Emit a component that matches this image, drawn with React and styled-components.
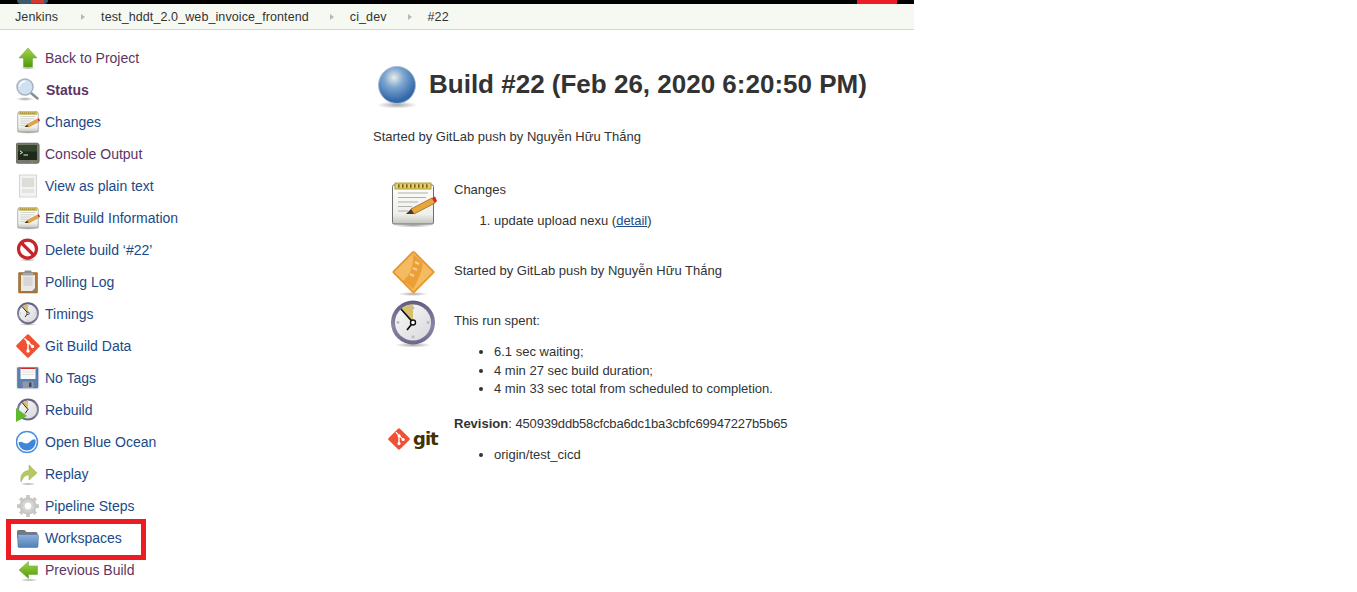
import React from 'react';
import styled, { createGlobalStyle } from 'styled-components';

const Global = createGlobalStyle`
  html, body {
    margin: 0;
    padding: 0;
    background: #fff;
    font-family: "Liberation Sans", Arial, sans-serif;
    color: #333;
  }
`;

const Page = styled.div`
  position: relative;
  width: 914px;
  height: 592px;
  overflow: hidden;
`;

const TopBar = styled.div`
  display: flex;
  justify-content: space-between;
  height: 4px;
  padding: 0 17px;
  background: #000;
  overflow: hidden;
`;
const LogoStub = styled.div`
  display: flex;
  width: 31px;
  height: 4px;
  background: #3d5a6c;
  border-radius: 0 0 8px 8px;
`;
const LogoRed = styled.div`
  width: 13px;
  height: 3px;
  margin-left: 14px;
  background: #d33833;
`;
const RedTab = styled.div`
  width: 40px;
  background: #ed1c24;
`;

const Crumbs = styled.div`
  display: flex;
  align-items: center;
  height: 25px;
  padding-left: 15px;
  background: #f6f9f2;
  border-bottom: 1px solid #d3d7cf;
  font-size: 12.5px;
  letter-spacing: 0.1px;
  color: #333;
`;
const Crumb = styled.span`
  &:first-child {
    margin-right: 2px;
  }
`;
const CrumbArrow = styled.span`
  width: 0;
  height: 0;
  margin: 0 16px 0 21px;
  border-left: 4px solid #b8b8b8;
  border-top: 3.5px solid transparent;
  border-bottom: 3.5px solid transparent;
`;

const Body = styled.div`
  display: flex;
`;

const Side = styled.nav`
  display: flex;
  flex-direction: column;
  width: 373px;
  flex: none;
  padding: 12px 0 0 16px;
  box-sizing: border-box;
`;
const Task = styled.div`
  display: flex;
  align-items: center;
  gap: ${(p) => (p.$bold ? 6 : 5)}px;
  height: 32px;
  font-size: 14px;
  font-weight: ${(p) => (p.$bold ? 700 : 400)};
  color: ${(p) => (p.$visited ? '#5c3566' : '#204a87')};
`;

const Main = styled.main`
  flex: 1;
`;
const TitleRow = styled.div`
  display: flex;
  align-items: center;
  gap: 8px;
  height: 48px;
  margin-top: 31px;
`;
const Title = styled.h1`
  margin: 0;
  padding-bottom: 2px;
  font-size: 26px;
  font-weight: 700;
  color: #333;
`;
const Intro = styled.p`
  margin: 19px 0 0;
  font-size: 13px;
  line-height: 18.5px;
`;
const Row = styled.div`
  display: grid;
  grid-template-columns: 48px 1fr;
  column-gap: 17px;
  margin: ${(p) => p.$top}px 0 0 16px;
`;
const RowBody = styled.div`
  padding-top: ${(p) => p.$pad || 0}px;
  align-self: ${(p) => (p.$center ? 'center' : 'start')};
  font-size: 13px;
  line-height: 18.5px;
`;
const Para = styled.div`
  margin-bottom: 13px;
`;
const ItemList = styled.ul`
  margin: 0;
  padding: 0 0 0 40px;
  list-style: ${(p) => p.$kind || 'disc'};
`;
const Detail = styled.span`
  color: #204a87;
  text-decoration: underline;
`;
const Hash = styled.span`
  letter-spacing: -0.16px;
`;
const IconCell = styled.div`
  align-self: ${(p) => (p.$center ? 'center' : 'start')};
  height: 48px;
`;

const Annotation = styled.div`
  position: absolute;
  left: 6px;
  top: 519px;
  width: 140px;
  height: 41px;
  box-sizing: border-box;
  border: 5px solid #ed1c24;
`;

const GitMark = styled.div`
  display: flex;
  align-items: center;
  gap: 3px;
  height: 46px;
  padding-bottom: 2px;
  margin-left: -1px;
`;
const GitWord = styled.span`
  font-family: "DejaVu Sans", sans-serif;
  font-size: 18px;
  font-weight: 700;
  letter-spacing: -1px;
  color: #413000;
`;

const Defs = () => (
  <svg width="0" height="0" style={{ position: 'absolute' }}>
    <defs>
      <linearGradient id="greenUp" x1="0" y1="0" x2="0" y2="1">
        <stop offset="0" stopColor="#a6d34f" />
        <stop offset="1" stopColor="#4e9a06" />
      </linearGradient>
      <linearGradient id="paper" x1="0" y1="0" x2="0" y2="1">
        <stop offset="0" stopColor="#fdfdfb" />
        <stop offset="0.75" stopColor="#efefeb" />
        <stop offset="1" stopColor="#c4c4be" />
      </linearGradient>
      <radialGradient id="ball" cx="0.42" cy="0.3" r="0.75">
        <stop offset="0" stopColor="#e8eee6" />
        <stop offset="0.35" stopColor="#7fa6d0" />
        <stop offset="0.85" stopColor="#2f66a8" />
        <stop offset="1" stopColor="#3f74b0" />
      </radialGradient>
      <radialGradient id="shadow" cx="0.5" cy="0.5" r="0.5">
        <stop offset="0" stopColor="#000" stopOpacity="0.35" />
        <stop offset="1" stopColor="#000" stopOpacity="0" />
      </radialGradient>
      <linearGradient id="folder" x1="0" y1="0" x2="0" y2="1">
        <stop offset="0" stopColor="#8fb3dc" />
        <stop offset="1" stopColor="#4f7fb8" />
      </linearGradient>
      <linearGradient id="face" x1="0" y1="0" x2="1" y2="1">
        <stop offset="0" stopColor="#fafaf8" />
        <stop offset="1" stopColor="#d8d8dc" />
      </linearGradient>
      <linearGradient id="bezel" x1="0" y1="0" x2="0" y2="1">
        <stop offset="0" stopColor="#5f5b7e" />
        <stop offset="0.6" stopColor="#8a87a6" />
        <stop offset="1" stopColor="#6a6688" />
      </linearGradient>
      <radialGradient id="cog" cx="0.5" cy="0.5" r="0.5">
        <stop offset="0" stopColor="#f2f2f0" />
        <stop offset="1" stopColor="#c0c0bd" />
      </radialGradient>
    </defs>
  </svg>
);

const Svg = ({ size = 24, children }) => (
  <svg width={size} height={size} viewBox="0 0 48 48" style={{ flex: 'none', display: 'block' }}>
    {children}
  </svg>
);

const UpArrow = () => (
  <Svg>
    <ellipse cx="24" cy="44" rx="16" ry="3" fill="url(#shadow)" />
    <path d="M24 4 L42 24 H33 V42 H15 V24 H6 Z" fill="url(#greenUp)" stroke="#6aa32a" strokeWidth="1" />
  </Svg>
);
const LeftArrow = () => (
  <Svg>
    <ellipse cx="26" cy="44" rx="18" ry="3" fill="url(#shadow)" />
    <path d="M6 24 L25 7 V16 H43 V33 H25 V41 Z" fill="url(#greenUp)" stroke="#6aa32a" strokeWidth="1" />
  </Svg>
);
const Magnifier = () => (
  <Svg>
    <ellipse cx="18" cy="42" rx="18" ry="4" fill="url(#shadow)" />
    <path d="M30 30 L43 41" stroke="#8a8f94" strokeWidth="5" strokeLinecap="round" />
    <circle cx="18" cy="18" r="16" fill="#cfe0f3" stroke="#a9b2ba" strokeWidth="3" />
    <path d="M7 17 A11 11 0 0 1 19 7" fill="none" stroke="#fff" strokeWidth="3" />
  </Svg>
);
const Notepad = ({ size = 24 }) => (
  <Svg size={size}>
    <ellipse cx="24" cy="45.5" rx="21" ry="2" fill="url(#shadow)" />
    <rect x="3.5" y="5" width="41" height="39" rx="1.5" fill="url(#paper)" stroke="#6f6f6f" strokeWidth="1" />
    <rect x="6" y="3" width="36" height="6" fill="#e3cf72" stroke="#a08a24" strokeWidth="0.8" />
    <path d="M9 6h1.6M13 6h1.6M17 6h1.6M21 6h1.6M25 6h1.6M29 6h1.6M33 6h1.6M37 6h1.6" stroke="#7a6510" strokeWidth="3.5" />
    <path d="M9 13h30M9 17.5h28M9 22h20M9 26.5h14M9 31h10" stroke="#a8a8a4" strokeWidth="0.9" />
    <path d="M22 29 L43 18 L46 23 L25 34 Z" fill="#e9a63c" stroke="#9c6a1a" strokeWidth="0.8" />
    <path d="M22 29 L25 34 L17 34 Z" fill="#4a3a20" />
    <path d="M43 18 L46 16.5 L48 21 L46 23 Z" fill="#d8232a" />
  </Svg>
);
const Terminal = () => (
  <Svg>
    <rect x="-0.5" y="2" width="47" height="41" rx="5" fill="#77796f" stroke="#55584f" strokeWidth="1" />
    <rect x="4" y="6" width="38" height="30" fill="#1d2a1a" />
    <rect x="4" y="6" width="38" height="13" fill="#33452d" />
    <path d="M8 18 L13 21 L8 24" fill="none" stroke="#e6efe0" strokeWidth="2" />
    <path d="M15 26 H24" stroke="#e6efe0" strokeWidth="2" />
    <circle cx="32" cy="40" r="1" fill="#8ae234" />
  </Svg>
);
const PlainDoc = () => (
  <Svg>
    <rect x="7" y="2" width="34" height="44" fill="#f2f2f0" stroke="#c8c8c4" strokeWidth="1.5" />
    <rect x="12" y="8" width="24" height="18" fill="#dcdcd9" />
    <rect x="12" y="30" width="24" height="8" fill="#e4e4e1" />
  </Svg>
);
const NoSign = () => (
  <Svg>
    <ellipse cx="24" cy="44" rx="17" ry="3" fill="url(#shadow)" />
    <circle cx="23" cy="22" r="18" fill="#fff" stroke="#c4262a" strokeWidth="6.5" />
    <path d="M10 9 L36 35" stroke="#c4262a" strokeWidth="6.5" />
  </Svg>
);
const Clipboard = () => (
  <Svg>
    <rect x="5" y="5" width="38" height="41" rx="1.5" fill="#a9773a" stroke="#8a5c22" strokeWidth="1" />
    <rect x="10" y="10" width="28" height="32" fill="#e9e9e6" />
    <rect x="15" y="14" width="18" height="18" fill="#d6d6d3" />
    <rect x="17" y="1" width="14" height="8" rx="2" fill="#8d9096" />
    <rect x="13" y="6" width="22" height="5" rx="1" fill="#a3a6ab" />
    <path d="M32 42 L38 36 V42 Z" fill="#8b8b88" />
  </Svg>
);
const Clock = ({ size = 24 }) => (
  <Svg size={size}>
    <ellipse cx="24" cy="45" rx="18" ry="2.5" fill="url(#shadow)" />
    <circle cx="24" cy="22.5" r="22" fill="url(#bezel)" />
    <circle cx="24" cy="22.5" r="18" fill="url(#face)" />
    <path d="M24 22.5 L13 8.5 A18 18 0 0 1 24 4.5 Z" fill="#d8c06a" />
    <circle cx="24" cy="8" r="1.4" fill="#bbb" />
    <circle cx="9" cy="22.5" r="1.4" fill="#bbb" />
    <circle cx="39" cy="22.5" r="1.4" fill="#bbb" />
    <circle cx="24" cy="37" r="1.4" fill="#bbb" />
    <path d="M24 22.5 L12 9 M24 22.5 L18 30" stroke="#111" strokeWidth="1.8" />
    <circle cx="24" cy="22.5" r="2.5" fill="#fff" stroke="#111" strokeWidth="1.4" />
  </Svg>
);
const GitDiamond = ({ size = 24 }) => (
  <Svg size={size}>
    <rect x="6.5" y="6.5" width="35" height="35" rx="3" transform="rotate(45 24 24)" fill="#f05133" />
    <path d="M17 9 L35 27" stroke="#fff" strokeWidth="3" />
    <path d="M24 17 V33" stroke="#fff" strokeWidth="3" />
    <circle cx="24" cy="17" r="3.4" fill="#fff" />
    <circle cx="24" cy="34" r="3.4" fill="#fff" />
    <circle cx="33" cy="25" r="3.4" fill="#fff" />
  </Svg>
);
const Floppy = () => (
  <Svg>
    <rect x="0" y="1" width="47" height="46" fill="#eeeeee" />
    <rect x="3" y="3" width="41" height="41" rx="2" fill="#5b7fb0" stroke="#3f5f8f" strokeWidth="1" />
    <rect x="9" y="3" width="30" height="23" fill="#fafafa" />
    <rect x="9" y="3" width="30" height="3" fill="#cc2a2a" />
    <path d="M12 12h24M12 17h24" stroke="#d8d8d8" strokeWidth="1.5" />
    <rect x="13" y="31" width="22" height="13" fill="#8f98a6" />
    <rect x="26" y="33" width="5" height="9" fill="#3d4a5e" />
  </Svg>
);
const Rebuild = () => (
  <Svg>
    <circle cx="24" cy="23" r="22" fill="url(#bezel)" />
    <circle cx="24" cy="23" r="18" fill="url(#face)" />
    <path d="M24 23 L13 9 A18 18 0 0 1 24 5 Z" fill="#d8c06a" />
    <path d="M24 23 L12 9 M24 23 L18 31" stroke="#111" strokeWidth="1.8" />
    <path d="M0 20 L22 36 L0 48 Z" fill="#5fb82e" />
  </Svg>
);
const Ocean = () => (
  <Svg>
    <circle cx="22" cy="24" r="21" fill="#fff" stroke="#4a90e0" strokeWidth="3" />
    <path d="M5 25 C12 19 18 32 26 25 C31 21 36 16 39 20 C41 32 32 41 22 41 C13 41 6 34 5 25 Z" fill="#3e86d8" />
  </Svg>
);
const Replay = () => (
  <Svg>
    <ellipse cx="24" cy="44" rx="16" ry="3" fill="url(#shadow)" />
    <path d="M10 40 C8 26 14 18 26 17 V6 L42 22 L26 36 V26 C18 26 14 31 10 40 Z" fill="#b5c95f" stroke="#93a84a" strokeWidth="1" />
  </Svg>
);
const Gear = () => (
  <Svg>
    <path
      d="M24 2v10M24 36v10M2 24h10M36 24h10M8.5 8.5l7 7M32.5 32.5l7 7M8.5 39.5l7-7M32.5 15.5l7-7"
      stroke="#c8c8c5"
      strokeWidth="7.5"
    />
    <circle cx="24" cy="24" r="17" fill="url(#cog)" />
    <circle cx="24" cy="24" r="8" fill="#fff" stroke="#b5b5b2" strokeWidth="1" />
  </Svg>
);
const Folder = () => (
  <Svg>
    <path d="M2 11 Q2 8 5 8 H17 L21 12 H40 Q43 12 43 15 V24 H2 Z" fill="#77787a" />
    <path d="M3 17 H42 Q45 17 45 20 L44 41 Q44 43 42 43 H6 Q4 43 4 41 Z" fill="url(#folder)" stroke="#4c6f9c" strokeWidth="1" />
  </Svg>
);
const Globe = () => (
  <Svg size={48}>
    <ellipse cx="24" cy="44" rx="20" ry="3.5" fill="url(#shadow)" />
    <circle cx="24" cy="24" r="18.5" fill="url(#ball)" stroke="#aabbd2" strokeWidth="1" />
  </Svg>
);
const TriggerDiamond = () => (
  <Svg size={48}>
    <ellipse cx="24" cy="46" rx="15" ry="2" fill="url(#shadow)" />
    <rect x="10" y="9.5" width="29" height="29" rx="1" transform="rotate(45 24.5 24)" fill="#f5bb63" stroke="#e8962a" strokeWidth="1.8" />
    <path d="M14 33 C21 27 25 18 24 6 L34 15 C33 23 29 33 24 41 Z" fill="#e8962a" opacity="0.75" />
    <path d="M21 26 l4 2 M24 20 l4 2 M26 14 l4 2" stroke="#f8d08e" strokeWidth="2" />
  </Svg>
);

const tasks = [
  { label: 'Back to Project', icon: <UpArrow />, visited: true },
  { label: 'Status', icon: <Magnifier />, visited: true, bold: true },
  { label: 'Changes', icon: <Notepad /> },
  { label: 'Console Output', icon: <Terminal />, visited: true },
  { label: 'View as plain text', icon: <PlainDoc /> },
  { label: 'Edit Build Information', icon: <Notepad /> },
  { label: 'Delete build ‘#22’', icon: <NoSign /> },
  { label: 'Polling Log', icon: <Clipboard /> },
  { label: 'Timings', icon: <Clock /> },
  { label: 'Git Build Data', icon: <GitDiamond /> },
  { label: 'No Tags', icon: <Floppy /> },
  { label: 'Rebuild', icon: <Rebuild /> },
  { label: 'Open Blue Ocean', icon: <Ocean /> },
  { label: 'Replay', icon: <Replay /> },
  { label: 'Pipeline Steps', icon: <Gear /> },
  { label: 'Workspaces', icon: <Folder /> },
  { label: 'Previous Build', icon: <LeftArrow />, visited: true },
];

const crumbs = ['Jenkins', 'test_hddt_2.0_web_invoice_frontend', 'ci_dev', '#22'];

const App = () => (
  <Page>
    <Global />
    <Defs />
    <TopBar>
      <LogoStub>
        <LogoRed />
      </LogoStub>
      <RedTab />
    </TopBar>
    <Crumbs>
      {crumbs.map((crumb, i) => (
        <React.Fragment key={crumb}>
          {i > 0 && <CrumbArrow />}
          <Crumb>{crumb}</Crumb>
        </React.Fragment>
      ))}
    </Crumbs>
    <Body>
      <Side>
        {tasks.map((task) => (
          <Task key={task.label} $visited={task.visited} $bold={task.bold}>
            {task.icon}
            {task.label}
          </Task>
        ))}
      </Side>
      <Main>
        <TitleRow>
          <Globe />
          <Title>Build #22 (Feb 26, 2020 6:20:50 PM)</Title>
        </TitleRow>
        <Intro>Started by GitLab push by Nguyễn Hữu Thắng</Intro>
        <Row $top={33}>
          <IconCell>
            <Notepad size={48} />
          </IconCell>
          <RowBody $pad={1}>
            <Para>Changes</Para>
            <ItemList as="ol" $kind="decimal">
              <li>
                update upload nexu (<Detail>detail</Detail>)
              </li>
            </ItemList>
          </RowBody>
        </Row>
        <Row $top={17}>
          <IconCell>
            <TriggerDiamond />
          </IconCell>
          <RowBody $center>Started by GitLab push by Nguyễn Hữu Thắng</RowBody>
        </Row>
        <Row $top={4}>
          <IconCell>
            <Clock size={48} />
          </IconCell>
          <RowBody $pad={12}>
            <Para>This run spent:</Para>
            <ItemList>
              <li>6.1 sec waiting;</li>
              <li>4 min 27 sec build duration;</li>
              <li>4 min 33 sec total from scheduled to completion.</li>
            </ItemList>
          </RowBody>
        </Row>
        <Row $top={16}>
          <IconCell $center>
            <GitMark>
              <GitDiamond size={22} />
              <GitWord>git</GitWord>
            </GitMark>
          </IconCell>
          <RowBody>
            <Para>
              <b>Revision</b>: <Hash>450939ddb58cfcba6dc1ba3cbfc69947227b5b65</Hash>
            </Para>
            <ItemList>
              <li>origin/test_cicd</li>
            </ItemList>
          </RowBody>
        </Row>
      </Main>
    </Body>
    <Annotation />
  </Page>
);

export default App;
